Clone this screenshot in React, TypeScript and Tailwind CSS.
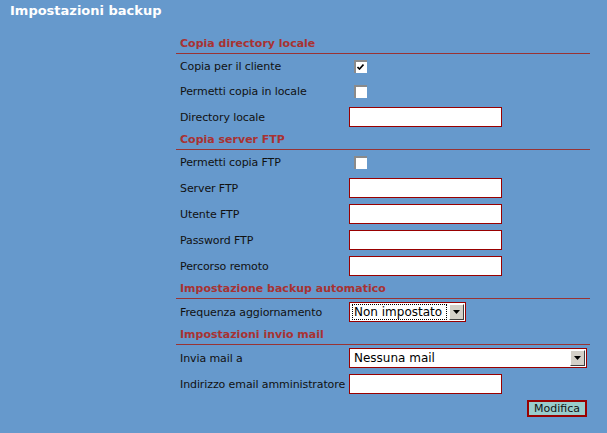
import React from 'react';

const font = "font-['DejaVu_Sans','Verdana',sans-serif]";

function Section({ title }: { title: string }) {
  return (
    <div className="flex h-[20px] items-center border-b border-[#993333] pl-[4px] pt-[2px] text-[11px] font-bold text-[#a83232]">
      {title}
    </div>
  );
}

function Row({ label, h = 26, children }: { label: string; h?: number; children?: React.ReactNode }) {
  return (
    <div className={`flex items-center ${h === 25 ? 'h-[25px]' : 'h-[26px]'}`}>
      <div className="w-[173px] pl-[4px] pt-[2px] text-[11px] tracking-[-0.1px] text-[#111]">{label}</div>
      <div className="flex items-center">{children}</div>
    </div>
  );
}

function Checkbox({ checked }: { checked?: boolean }) {
  return (
    <span className="ml-[5px] flex h-[13px] w-[13px] items-start justify-start border-l-2 border-t-2 border-[#8a8a8a] bg-white pl-[1px] pt-[2px]">
      {checked && (
        <svg width="7" height="6" viewBox="0 0 7 6">
          <path d="M0.5 3 L2.5 5 L6.5 0.5" stroke="#000" strokeWidth="1.6" fill="none" />
        </svg>
      )}
    </span>
  );
}

function TextInput() {
  return <input type="text" className="h-[20px] w-[153px] border border-[#990000] bg-white outline-none" />;
}

function Arrow() {
  return (
    <span className="flex h-[16px] w-[15px] items-center justify-center border-b border-l border-r border-t border-b-[#404040] border-l-white border-r-[#404040] border-t-white bg-[#d4d0c8]">
      <svg width="7" height="4" viewBox="0 0 7 4">
        <path d="M0 0 H7 L3.5 4 Z" fill="#000" />
      </svg>
    </span>
  );
}

function Select({ value, wide, focused }: { value: string; wide?: boolean; focused?: boolean }) {
  return (
    <div
      className={`flex h-[20px] items-center justify-between border border-[#990000] bg-white pl-[3px] pr-[1px] ${
        wide ? 'w-[238px]' : 'w-[117px]'
      }`}
    >
      <span className={`text-[12px] leading-[14px] text-black ${focused ? 'outline outline-1 outline-dotted outline-black' : ''} pl-[1px] pr-[4px]`}>
        {value}
      </span>
      <Arrow />
    </div>
  );
}

export default function App() {
  return (
    <div className={`min-h-[433px] w-full bg-[#6699cc] ${font}`}>
      <div className="h-[34px] pl-[10px] pt-[3px] text-[13px] font-bold leading-[16px] text-white">Impostazioni backup</div>
      <div className="ml-[176px] w-[414px]">
        <Section title="Copia directory locale" />
        <Row label="Copia per il cliente" h={25}>
          <Checkbox checked />
        </Row>
        <Row label="Permetti copia in locale" h={25}>
          <Checkbox />
        </Row>
        <Row label="Directory locale">
          <TextInput />
        </Row>
        <Section title="Copia server FTP" />
        <Row label="Permetti copia FTP" h={25}>
          <Checkbox />
        </Row>
        <Row label="Server FTP">
          <TextInput />
        </Row>
        <Row label="Utente FTP">
          <TextInput />
        </Row>
        <Row label="Password FTP">
          <TextInput />
        </Row>
        <Row label="Percorso remoto">
          <TextInput />
        </Row>
        <Section title="Impostazione backup automatico" />
        <Row label="Frequenza aggiornamento">
          <Select value="Non impostato" focused />
        </Row>
        <Section title="Impostazioni invio mail" />
        <Row label="Invia mail a">
          <Select value="Nessuna mail" wide />
        </Row>
        <Row label="Indirizzo email amministratore">
          <TextInput />
        </Row>
        <div className="flex justify-end pr-[3px] pt-[3px]">
          <button className="h-[17px] w-[60px] border-2 border-[#990000] bg-[#99cccc] text-[11px] leading-[13px] text-[#111]">
            Modifica
          </button>
        </div>
      </div>
    </div>
  );
}
